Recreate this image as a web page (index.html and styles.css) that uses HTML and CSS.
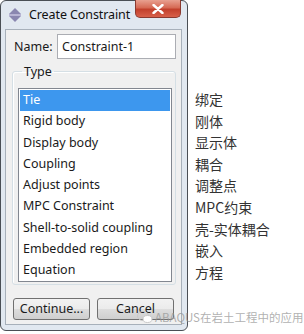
FILE: index.html
```html
<!DOCTYPE html>
<html>
<head>
<meta charset="utf-8">
<link rel="stylesheet" href="styles.css">
</head>
<body>
<div class="page">
  <div class="window">
    <div class="titlebar">
      <svg class="appicon" width="14" height="14" viewBox="0 0 14 14">
        <path d="M7 0 L13 6 L1 6 Z" fill="#8a86b0"/>
        <path d="M7 14 L13 8 L1 8 Z" fill="#8a86b0"/>
        <rect x="1" y="6" width="12" height="2" fill="#b8b4d4"/>
      </svg>
      <span class="title">Create Constraint</span>
      <div class="close">
        <svg width="12" height="10" viewBox="0 0 12 10">
          <path d="M1.5 1 L10.5 9 M10.5 1 L1.5 9" stroke="#fff" stroke-width="2.4" stroke-linecap="round"/>
        </svg>
      </div>
    </div>
    <div class="client">
      <div class="namerow">
        <span class="namelabel">Name:</span>
        <div class="input">Constraint-1</div>
      </div>
      <fieldset class="group">
        <legend>Type</legend>
        <div class="list">
          <div class="item selected">Tie</div>
          <div class="item">Rigid body</div>
          <div class="item">Display body</div>
          <div class="item">Coupling</div>
          <div class="item">Adjust points</div>
          <div class="item">MPC Constraint</div>
          <div class="item">Shell-to-solid coupling</div>
          <div class="item">Embedded region</div>
          <div class="item">Equation</div>
        </div>
      </fieldset>
      <div class="buttons">
        <div class="btn">Continue...</div>
        <div class="btn">Cancel</div>
      </div>
    </div>
  </div>
  <div class="labels">
    <div class="lab">绑定</div>
    <div class="lab">刚体</div>
    <div class="lab">显示体</div>
    <div class="lab">耦合</div>
    <div class="lab">调整点</div>
    <div class="lab">MPC约束</div>
    <div class="lab">壳-实体耦合</div>
    <div class="lab">嵌入</div>
    <div class="lab">方程</div>
  </div>
</div>
<div class="watermark">
  <svg width="16" height="14" viewBox="0 0 16 14">
    <ellipse cx="6" cy="6" rx="5.5" ry="4.5" fill="none" stroke="#c8c8c8" stroke-width="1"/>
    <ellipse cx="10.5" cy="9" rx="4.5" ry="3.5" fill="#fff" stroke="#c8c8c8" stroke-width="1"/>
  </svg>
  <span>ABAQUS在岩土工程中的应用</span>
</div>
</body>
</html>
```
FILE: styles.css
```css
html, body {
  margin: 0;
  padding: 0;
  background: #ffffff;
}
body {
  width: 304px;
  height: 334px;
  position: relative;
  overflow: hidden;
  font-family: "Noto Sans", "Liberation Sans", sans-serif;
  font-size: 12px;
  color: #1a1a1a;
}
.page {
  display: flex;
  align-items: flex-start;
}
.window {
  width: 188px;
  height: 331px;
  box-sizing: border-box;
  border: 1px solid #4a4f55;
  border-radius: 6px;
  background: #e1e8f0;
  display: flex;
  flex-direction: column;
}
.titlebar {
  height: 28px;
  display: flex;
  align-items: flex-start;
  flex-shrink: 0;
}
.appicon {
  margin: 7px 0 0 7px;
}
.title {
  margin: 5px 0 0 7px;
  font-size: 12.5px;
  color: #111;
  letter-spacing: -0.1px;
}
.close {
  margin-left: auto;
  margin-right: 6px;
  width: 46px;
  height: 18px;
  margin-top: -1px;
  box-sizing: border-box;
  border: 1px solid #8a3a30;
  border-top: none;
  border-radius: 0 0 5px 5px;
  background: linear-gradient(#e8a090 0%, #d66a55 45%, #c2402c 55%, #d8604a 100%);
  display: flex;
  align-items: center;
  justify-content: center;
}
.client {
  flex: 1;
  margin: 0 5px 5px 4px;
  border: 1px solid #a7b0ba;
  background: #f0f0f0;
  display: flex;
  flex-direction: column;
}
.namerow {
  display: flex;
  align-items: center;
  padding: 4px 5px 0 8px;
}
.namelabel {
  width: 43px;
  font-size: 12.5px;
}
.input {
  flex: 1;
  height: 25px;
  box-sizing: border-box;
  border: 1px solid #abadb3;
  background: #fff;
  padding: 0 4px;
  line-height: 23px;
  font-size: 12.5px;
}
.group {
  margin: 4px 5px 0 6px;
  padding: 8px 3px 5px 5px;
  border: 1px solid #d5dfe5;
  border-radius: 3px;
  height: 222px;
  box-sizing: border-box;
  box-shadow: inset 1px 1px 0 #fff;
}
.group legend {
  padding: 0 2px;
  margin-left: 4px;
  font-size: 12.5px;
}
.list {
  border: 1px solid #828790;
  background: #fff;
  padding: 1px;
  height: 194px;
  box-sizing: border-box;
}
.item {
  height: 21.3px;
  line-height: 20px;
  padding-left: 3px;
  font-size: 12.5px;
  white-space: nowrap;
}
.item.selected {
  background: #3d97ee;
  color: #fff;
}
.buttons {
  display: flex;
  gap: 7px;
  padding: 13px 0 0 7px;
}
.btn {
  width: 77px;
  height: 22px;
  box-sizing: border-box;
  border: 1px solid #707070;
  border-radius: 3px;
  background: linear-gradient(#f2f2f2 0%, #ebebeb 50%, #dddddd 51%, #cfcfcf 100%);
  text-align: center;
  line-height: 20px;
  font-size: 12.5px;
}
.labels {
  padding: 89px 0 0 7px;
  display: flex;
  flex-direction: column;
  font-family: "Noto Sans CJK SC", "Noto Sans", sans-serif;
  font-size: 14px;
  color: #333333;
}
.lab {
  height: 21.6px;
  line-height: 21.6px;
  white-space: nowrap;
}
.watermark {
  position: absolute;
  left: 137px;
  top: 309px;
  display: flex;
  align-items: center;
  gap: 2px;
  color: rgba(150, 150, 150, 0.75);
  font-family: "Noto Sans CJK SC", "Noto Sans", sans-serif;
  font-size: 11.5px;
  line-height: 16px;
}
```
